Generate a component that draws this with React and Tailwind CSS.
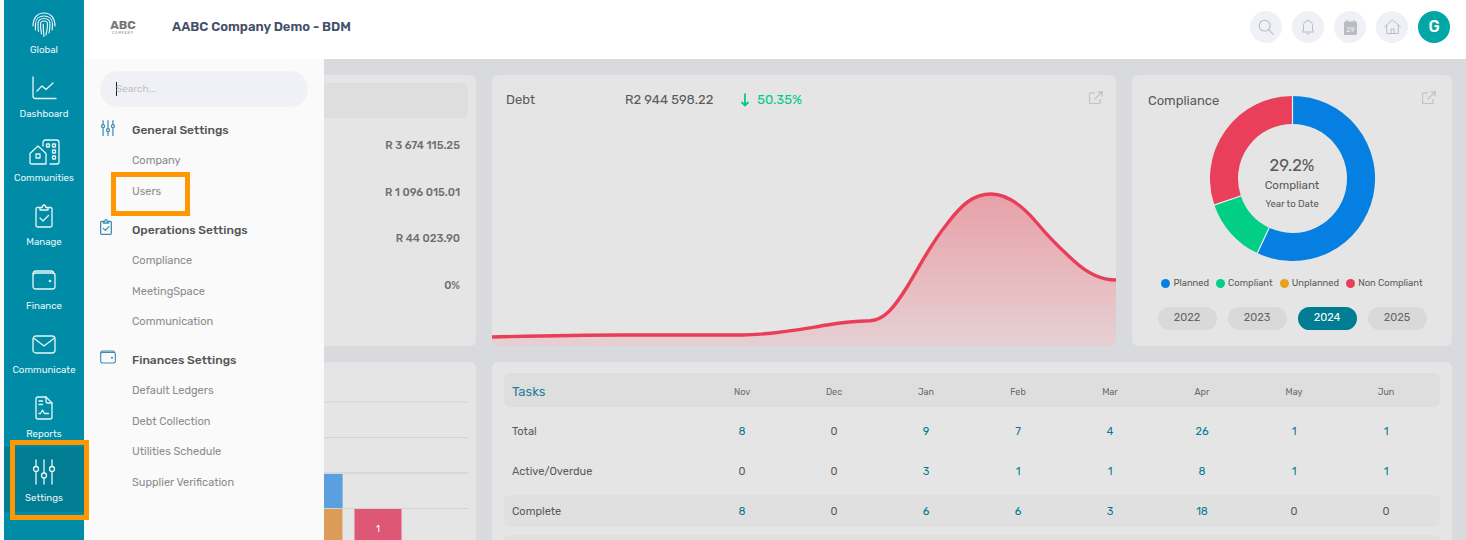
import React from "react";

const font = { fontFamily: "Rubik, Inter, 'Liberation Sans', sans-serif" };

function Fingerprint() {
  return (
    <svg width="24" height="25" viewBox="0 0 24 25" fill="none" stroke="currentColor" strokeWidth="1.150" strokeLinecap="round">
      <path d="M1 14C1 6 5.500 1 12 1s11 5 11 13" />
      <path d="M3.500 18C3.200 15.500 3.500 14 3.500 12 3.500 7 7 4 12 4s8.500 3 8.500 8c0 2.500 0 4.500-.5 6" />
      <path d="M6.500 19.500C6 17 6 14.500 6 12c0-3.500 2.500-5.500 6-5.500s6 2 6 5.500c0 3.500-.5 6-1 9" />
      <path d="M9.500 22C9 19 8.500 15 8.500 12c0-2 1.500-3 3.500-3s3.500 1 3.500 3c0 4-.5 7-1.500 11" />
      <path d="M12 24.500c-.5-4-.8-8-.8-12.500" />
    </svg>
  );
}

function ChartLine() {
  return (
    <svg width="26" height="24" viewBox="0 0 26 24" fill="none" stroke="currentColor" strokeWidth="1.300" strokeLinecap="round" strokeLinejoin="round">
      <path d="M2 1v19c0 1.500.8 2.500 2.500 2.500H25" />
      <path d="M6 15l5-5 4 3.500L22 7" />
    </svg>
  );
}

function Buildings() {
  return (
    <svg width="32" height="26" viewBox="0 0 32 26" fill="none" stroke="currentColor" strokeWidth="1.300" strokeLinecap="round" strokeLinejoin="round">
      <path d="M2 14.500 10 7l8 7.500V25H3.500C2.500 25 2 24.500 2 23.500z" />
      <rect x="8" y="15" width="4" height="4" />
      <path d="M15 7V3.500C15 2 16 1 17.500 1h11C30 1 31 2 31 3.500V23c0 1.300-1 2-2 2h-7" />
      <rect x="18.500" y="5" width="3" height="3" rx=".6" />
      <rect x="24.500" y="5" width="3" height="3" rx=".6" />
      <rect x="24.500" y="11" width="3" height="3" rx=".6" />
      <rect x="24.500" y="17" width="3" height="3" rx=".6" />
    </svg>
  );
}

function Clipboard({ size = 24, stroke = 1.3 }) {
  return (
    <svg width={size * 0.75} height={size} viewBox="0 0 18 24" fill="none" stroke="currentColor" strokeWidth={stroke} strokeLinecap="round" strokeLinejoin="round">
      <path d="M5 3.500H2.500C1.500 3.500 1 4 1 5v16.500C1 22.500 1.500 23 2.500 23h13c1 0 1.500-.5 1.500-1.500V5c0-1-.5-1.500-1.500-1.500H13" />
      <path d="M5 6V3.500h2.200C7.400 2 8 1 9 1s1.600 1 1.800 2.500H13V6z" />
      <path d="M5 14l3 3 5.500-5.500" />
    </svg>
  );
}

function Wallet({ w = 24, h = 20, stroke = 1.3 }) {
  return (
    <svg width={w} height={h} viewBox="0 0 24 20" fill="none" stroke="currentColor" strokeWidth={stroke} strokeLinecap="round" strokeLinejoin="round">
      <rect x="1" y="3" width="22" height="16" rx="2.500" />
      <path d="M1 4c0-1.800 1.200-3 3-3h15c1.500 0 2.500.8 2.500 2" />
      <circle cx="18" cy="11" r=".7" fill="currentColor" />
    </svg>
  );
}

function Mail() {
  return (
    <svg width="24" height="19" viewBox="0 0 24 19" fill="none" stroke="currentColor" strokeWidth="1.300" strokeLinejoin="round">
      <rect x="1" y="1" width="22" height="17" rx="3" />
      <path d="M1.500 3 12 11 22.500 3" />
    </svg>
  );
}

function ReportDoc() {
  return (
    <svg width="18" height="24" viewBox="0 0 18 24" fill="none" stroke="currentColor" strokeWidth="1.300" strokeLinecap="round" strokeLinejoin="round">
      <path d="M11 1H3C1.800 1 1 1.800 1 3v18c0 1.200.8 2 2 2h12c1.200 0 2-.8 2-2V7z" />
      <path d="M11 1v4.500c0 1 .5 1.500 1.500 1.500H17" />
      <path d="M4 5h3.500M4 8.500h3.500" />
      <path d="M4 17.500h1.500L7.500 14l2 3.500h4" />
    </svg>
  );
}

function Sliders({ w = 24, h = 26, stroke = 1.3 }) {
  return (
    <svg width={w} height={h} viewBox="0 0 24 26" fill="none" stroke="currentColor" strokeWidth={stroke} strokeLinecap="round">
      <path d="M4 1v6.500M4 12.500V25M12 1v13M12 19v6M20 1v6.500M20 12.500V25" />
      <circle cx="4" cy="10" r="2.500" />
      <circle cx="12" cy="16.500" r="2.500" />
      <circle cx="20" cy="10" r="2.500" />
    </svg>
  );
}

function Expand() {
  return (
    <svg width="14" height="14" viewBox="0 0 14 14" fill="none" stroke="#c2c2c2" strokeWidth="1.200" className="block">
      <path d="M6 1.800H1.500c-.5 0-1 .4-1 1v8.700c0 .6.500 1 1 1h8.700c.6 0 1-.4 1-1V8" />
      <path d="M5.500 8.500 13 1M8.500.800H13.200V5.500" />
    </svg>
  );
}

const navItems = [
  { label: "Global", icon: <Fingerprint /> },
  { label: "Dashboard", icon: <ChartLine /> },
  { label: "Communities", icon: <Buildings /> },
  { label: "Manage", icon: <Clipboard /> },
  { label: "Finance", icon: <Wallet /> },
  { label: "Communicate", icon: <Mail /> },
  { label: "Reports", icon: <ReportDoc /> },
];

function Sidebar() {
  return (
    <aside className="relative z-30 w-20 h-full shrink-0 bg-[#008ca6] text-[#e9f6f8] flex flex-col items-stretch">
      <div className="flex flex-col">
        {navItems.map((item) => (
          <div key={item.label} className="h-16 flex flex-col items-center pt-[11px]">
            <div className="h-[26px] flex items-center justify-center">{item.icon}</div>
            <span className="mt-[7px] text-[9.700px] leading-3">{item.label}</span>
          </div>
        ))}
        <div className="relative h-[65px] -mt-[1px] bg-[#007c93] flex flex-col items-center pt-[12px]">
          <Sliders />
          <span className="mt-[7px] text-[9.700px] leading-3">Settings</span>
          <div className="absolute left-[6px] right-[-5px] top-[-7px] bottom-[-8px] border-[5px] border-[#ff9800] pointer-events-none"></div>
        </div>
      </div>
    </aside>
  );
}

function HeaderIcon({ children }) {
  return <div className="w-8 h-8 rounded-full bg-[#f0f1f6] text-[#b9bcc4] flex items-center justify-center">{children}</div>;
}

function Header() {
  return (
    <header className="h-[59px] shrink-0 bg-white flex items-center pb-[5px] pl-[22px] pr-[16px] relative z-10">
      <div className="w-[34px] flex flex-col items-center text-[#777]">
        <span className="text-[12px] leading-[12px] font-bold">ABC</span>
        <span className="text-[3px] leading-[4px] tracking-[1px]">COMPANY</span>
      </div>
      <h1 className="ml-[32px] text-[13px] font-semibold text-[#434f6b]">AABC Company Demo - BDM</h1>
      <div className="ml-auto flex items-center gap-[10px]">
        <HeaderIcon>
          <svg width="16" height="16" viewBox="0 0 16 16" fill="none" stroke="currentColor" strokeWidth="1.100" strokeLinecap="round">
            <circle cx="6.700" cy="6.700" r="5.500" />
            <path d="m10.800 10.800 4.400 4.400" />
          </svg>
        </HeaderIcon>
        <HeaderIcon>
          <svg width="14" height="16" viewBox="0 0 14 16" fill="none" stroke="currentColor" strokeWidth="1" strokeLinejoin="round">
            <path d="M2.500 11.500V6.500C2.500 3.800 4.500 1.800 7 1.800s4.500 2 4.500 4.700v5l1.500 1.500H1z" />
            <path d="M5.500 14.500c.5.700 2.500.7 3 0M7 .5v1.300" />
          </svg>
        </HeaderIcon>
        <HeaderIcon>
          <svg width="13" height="15" viewBox="0 0 13 15">
            <rect x="0" y="1.500" width="13" height="13.500" rx="1" fill="#b9bcc4" />
            <path d="M3 0v3M10 0v3" stroke="#b9bcc4" strokeWidth="1.200" />
            <text x="6.500" y="11.700" textAnchor="middle" fontSize="7" fill="#eceef2">29</text>
          </svg>
        </HeaderIcon>
        <HeaderIcon>
          <svg width="17" height="16" viewBox="0 0 17 16" fill="none" stroke="currentColor" strokeWidth="1" strokeLinejoin="round" strokeLinecap="round">
            <path d="M.7 7.700 8.500 1l7.800 6.700M2.700 6.200v8.300h11.600V6.200" />
            <path d="M7 14.500V10h3v4.500" />
          </svg>
        </HeaderIcon>
        <div className="w-8 h-8 rounded-full bg-[#00a7a5] text-white text-[16px] font-medium flex items-center justify-center">G</div>
      </div>
    </header>
  );
}

const menuGroups = [
  { title: "General Settings", icon: <Sliders w={16} h={16} stroke={2} />, items: ["Company", "Users"], top: "mt-[8px]" },
  { title: "Operations Settings", icon: <Clipboard size={16} stroke={1.900} />, items: ["Compliance", "MeetingSpace", "Communication"], top: "mt-[9px]" },
  { title: "Finances Settings", icon: <Wallet w={16} h={14} stroke={1.700} />, items: ["Default Ledgers", "Debt Collection", "Utilities Schedule", "Supplier Verification"], top: "mt-[9px]" },
];

function SettingsMenu() {
  return (
    <div className="absolute left-0 top-0 bottom-0 w-60 bg-[#fafafa] z-20 px-4 pt-3">
      <div className="h-9 rounded-full bg-[#f0f1f6] flex items-center pl-4 text-[10px] text-[#c2c2c2]">
        <span className="w-px h-[14px] bg-[#222] -mr-px"></span>
        Search...
      </div>
      {menuGroups.map((g) => (
        <div key={g.title} className={g.top}>
          <div className="h-[30px] flex items-center text-[#3d8db0]">
            <span className="w-8 -mt-[5px] flex">{g.icon}</span>
            <span className="text-[12px] font-medium text-[#555]">{g.title}</span>
          </div>
          <div className="flex flex-col">
            {g.items.map((it) => (
              <div key={it} className="relative h-[30.400px] pl-8 pt-[3px] flex items-center text-[11px] text-[#8c8c8c]">
                {it}
                {it === "Users" && (
                  <div className="absolute left-[11px] top-[-3.500px] w-[79px] h-[44px] border-[5px] border-[#ff9800] pointer-events-none"></div>
                )}
              </div>
            ))}
          </div>
        </div>
      ))}
    </div>
  );
}

function SummaryCard() {
  const rows = ["R 3 674 115.25", "R 1 096 015.01", "R 44 023.90", "0%"];
  return (
    <section className="rounded-md bg-[#e5e5e5] p-2">
      <div className="h-[35px] rounded-md bg-[#dedede]"></div>
      <div className="mt-[5px] flex flex-col">
        {rows.map((r) => (
          <div key={r} className="h-[46.500px] flex items-center justify-end pr-2 text-[11px] font-medium text-[#6f6f6f]">{r}</div>
        ))}
      </div>
    </section>
  );
}

const debtLine =
  "M0 213C40 212 80 211 130 211L250 211C280 211 310 205 335 201C350 198.500 365 197 378 196.700C392 196 402 184 415 163C430 138 440 118 455 100C470 80 482 70 499 70C515 70 530 81 545 99C560 117 570 126 582 137C595 149 608 156 624 156";

function DebtCard() {
  return (
    <section className="relative rounded-md bg-[#e5e5e5] flex flex-col overflow-hidden">
      <div className="flex items-center h-[49px] pl-[14px] pr-[13px] text-[13px] text-[#5b5b5b]">
        <span className="w-[119px]">Debt</span>
        <span>R2 944 598.22</span>
        <span className="ml-[27px] text-[#00c98a] flex items-center gap-[7px]">
          <svg width="10" height="14" viewBox="0 0 10 14" fill="none" stroke="currentColor" strokeWidth="1.800">
            <path d="M5 .5v12M1.500 9 5 12.500 8.500 9" />
          </svg>
          50.35%
        </span>
        <span className="ml-auto -mt-[3px]"><Expand /></span>
      </div>
      <svg className="flex-1 w-full block" viewBox="0 0 624 222" preserveAspectRatio="none">
        <defs>
          <linearGradient id="debtFill" x1="0" y1="0" x2="0" y2="1">
            <stop offset="0" stopColor="#e8a0a8" />
            <stop offset="1" stopColor="#e6d0d3" />
          </linearGradient>
        </defs>
        <path d={debtLine + "V222H0Z"} fill="url(#debtFill)" />
        <path d={debtLine} fill="none" stroke="#e83e57" strokeWidth="3.400" />
      </svg>
    </section>
  );
}

const legend = [
  { label: "Planned", color: "bg-[#0580e2]" },
  { label: "Compliant", color: "bg-[#00cf85]" },
  { label: "Unplanned", color: "bg-[#e7a11c]" },
  { label: "Non Compliant", color: "bg-[#e93f5b]" },
];

function ComplianceCard() {
  return (
    <section className="rounded-md bg-[#e5e5e5] relative flex flex-col items-center pt-[21px]">
      <span className="absolute left-4 top-[16px] text-[13px] text-[#5b5b5b]">Compliance</span>
      <span className="absolute right-[16px] top-[16px]"><Expand /></span>
      <div className="relative w-[165px] h-[165px]">
        <svg width="165" height="165" viewBox="0 0 165 165" className="block">
          <g fill="none" strokeWidth="28">
            <path d="M82.500 14A68.500 68.500 0 1 1 53.200 144.400" stroke="#0580e2" />
            <path d="M53.200 144.400A68.500 68.500 0 0 1 17.600 104.500" stroke="#00cf85" />
            <path d="M17.600 104.500A68.500 68.500 0 0 1 82.500 14" stroke="#e93f5b" />
          </g>
          <path d="M82.500 0V28M47.100 157.500 59.400 131.300M3.900 109.100 31.400 99.800" stroke="#eeeeee" strokeWidth="1.200" />
        </svg>
        <div className="absolute inset-0 flex flex-col items-center pt-[61px] text-[#5b5b5b]">
          <span className="text-[16.500px] leading-[18px]">29.2%</span>
          <span className="text-[11.500px] leading-[14px] mt-[3px]">Compliant</span>
          <span className="text-[9.500px] leading-[12px] mt-[6px]">Year to Date</span>
        </div>
      </div>
      <div className="mt-[15px] flex items-center gap-[7px] text-[9.400px] text-[#5b5b5b]">
        {legend.map((l) => (
          <span key={l.label} className="flex items-center gap-[3px]">
            <span className={`w-[9px] h-[9px] rounded-full ${l.color}`}></span>
            {l.label}
          </span>
        ))}
      </div>
      <div className="mt-[17px] flex gap-[11px]">
        {["2022", "2023", "2024", "2025"].map((y) => (
          <span
            key={y}
            className={
              y === "2024"
                ? "w-[59px] h-[23px] rounded-full bg-[#007c93] text-white text-[11px] flex items-center justify-center"
                : "w-[59px] h-[23px] rounded-full bg-[#d9d9d9] text-[#666] text-[11px] flex items-center justify-center"
            }
          >
            {y}
          </span>
        ))}
      </div>
    </section>
  );
}

function BarCard() {
  return (
    <section className="rounded-md bg-[#e5e5e5] px-2 pt-[39px] overflow-hidden">
      <div className="flex flex-col">
        <div className="h-[35.500px] border-t-2 border-[#dcdcdc]"></div>
        <div className="h-[35.500px] border-t border-[#d2d2d2]"></div>
        <div className="h-[35.500px] border-t-2 border-[#d8d8d8] flex justify-end pr-[125px]">
          <div className="w-[48px] bg-[#5a9fdf] border-r border-[#8bbbe6]"></div>
        </div>
        <div className="h-[40px] border-t border-[#d2d2d2] flex justify-end pr-[66px] gap-[11px]">
          <div className="w-[48px] bg-[#db9c57] border-r border-[#e8c49c]"></div>
          <div className="w-[48px] bg-[#de5875] border-x border-[#e89aac] text-white text-[9px] pt-[3px] flex items-center justify-center">1</div>
        </div>
      </div>
    </section>
  );
}

const months = ["Nov", "Dec", "Jan", "Feb", "Mar", "Apr", "May", "Jun"];
const taskRows = [
  { label: "Total", values: [8, 0, 9, 7, 4, 26, 1, 1], shade: false },
  { label: "Active/Overdue", values: [0, 0, 3, 1, 1, 8, 1, 1], shade: false },
  { label: "Complete", values: [8, 0, 6, 6, 3, 18, 0, 0], shade: true },
];

function TasksCard() {
  return (
    <section className="rounded-md bg-[#e5e5e5] px-3 pt-[11px] overflow-hidden">
      <div className="h-[34px] rounded-md bg-[#dedede] grid grid-cols-[184px_repeat(8,92px)] items-center px-2 pt-[3px] text-[9px] text-[#6a6a6a]">
        <span className="text-[13px] text-[#1f7f9b]">Tasks</span>
        {months.map((m) => (
          <span key={m} className="text-center pt-[3px]">{m}</span>
        ))}
      </div>
      <div className="mt-[8px] flex flex-col gap-[8px]">
        {taskRows.map((row) => (
          <div
            key={row.label}
            className={
              row.shade
                ? "h-[32px] rounded-md bg-[#e0e0e0] grid grid-cols-[184px_repeat(8,92px)] items-center px-2 pt-[2px] text-[11px]"
                : "h-[32px] grid grid-cols-[184px_repeat(8,92px)] items-center px-2 pt-[2px] text-[11px]"
            }
          >
            <span className="text-[#5b5b5b]">{row.label}</span>
            {row.values.map((v, i) => (
              <span key={i} className={v === 0 ? "text-center text-[#5b5b5b]" : "text-center text-[#007c93]"}>{v}</span>
            ))}
          </div>
        ))}
        <div className="h-[32px] rounded-md bg-[#e0e0e0]"></div>
      </div>
    </section>
  );
}

export default function App() {
  return (
    <div className="w-[1466px] h-[540px] overflow-hidden flex bg-[#fafafa]" style={font}>
      <div className="w-1 shrink-0"></div>
      <Sidebar />
      <main className="flex-1 min-w-0 flex flex-col">
        <Header />
        <div className="relative flex-1 min-h-0 bg-[#d9dadd] overflow-hidden">
          <SettingsMenu />
          <div className="grid grid-cols-[376px_624px_320px] grid-rows-[271px_1fr] gap-4 pl-4 pt-4 h-[560px]">
            <SummaryCard />
            <DebtCard />
            <ComplianceCard />
            <BarCard />
            <div className="col-span-2 grid">
              <TasksCard />
            </div>
          </div>
        </div>
      </main>
    </div>
  );
}
